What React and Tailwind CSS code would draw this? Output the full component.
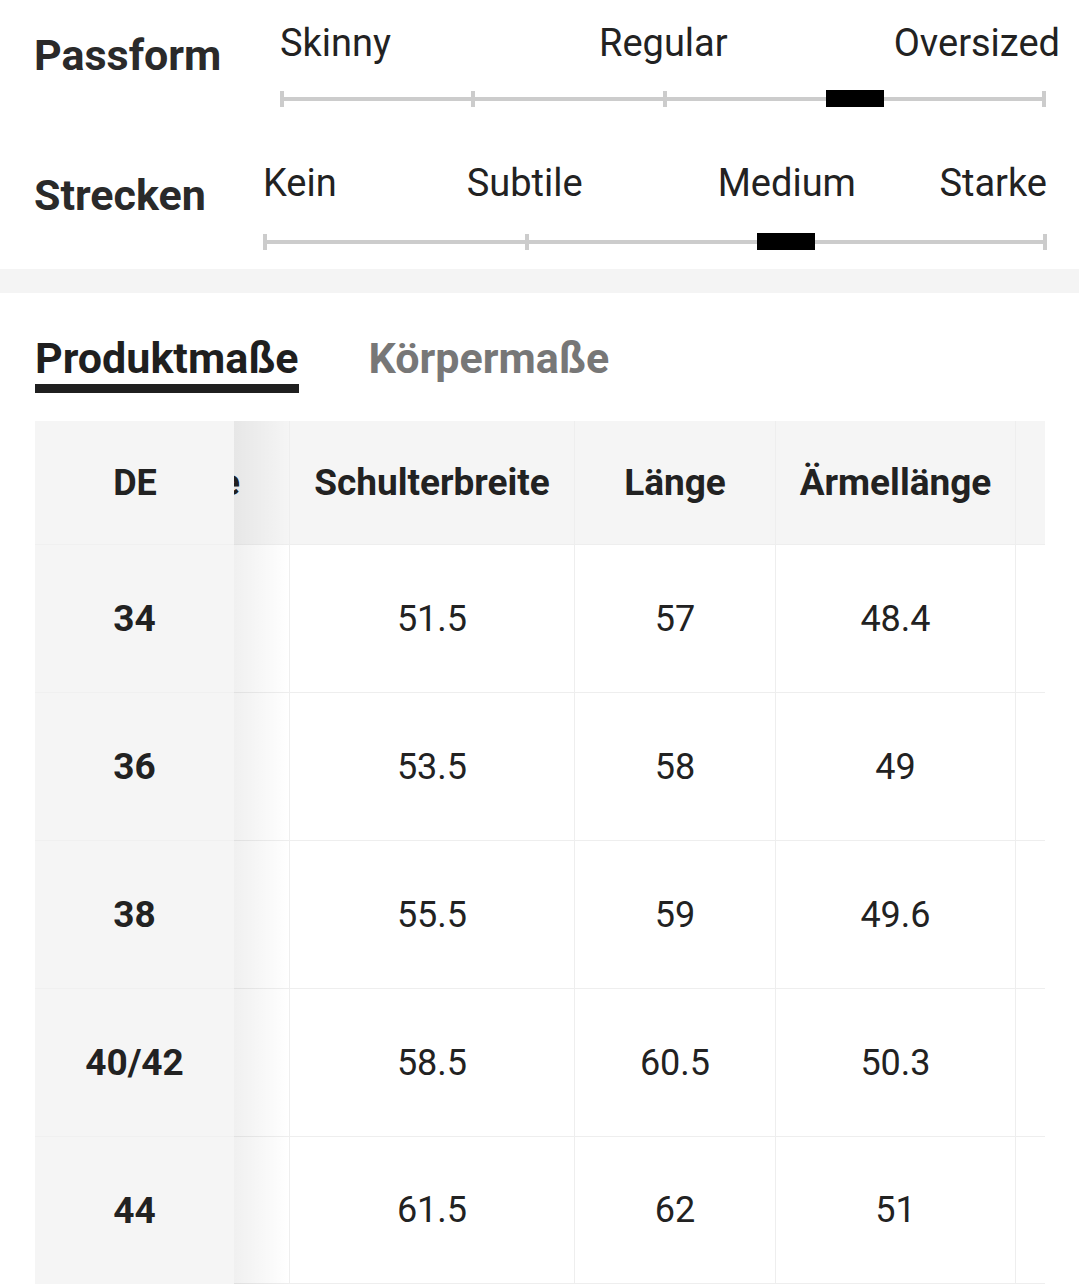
const FONT = { fontFamily: 'Roboto, "Noto Sans", Arial, sans-serif' }

const ROWS = [
  { de: '34', schulter: '51.5', laenge: '57', aermel: '48.4' },
  { de: '36', schulter: '53.5', laenge: '58', aermel: '49' },
  { de: '38', schulter: '55.5', laenge: '59', aermel: '49.6' },
  { de: '40/42', schulter: '58.5', laenge: '60.5', aermel: '50.3' },
  { de: '44', schulter: '61.5', laenge: '62', aermel: '51' },
]

function Slider({ width, ticks, thumb }) {
  return (
    <div className="relative h-[4px] bg-[#cccccc]" style={{ width }}>
      {ticks.map((t, i) => (
        <div
          key={i}
          className="absolute top-[-6px] h-[16px] w-[4px] bg-[#cccccc]"
          style={{ left: t }}
        />
      ))}
      <div className="absolute top-[-7px] h-[17px] w-[58px] bg-black" style={{ left: thumb }} />
    </div>
  )
}

export default function App() {
  return (
    <div className="w-[1079px] bg-white text-[#222]" style={FONT}>
      {/* fit sliders */}
      <div className="pl-[34px] pt-[25px] h-[269px]">
        <div className="flex items-start">
          <div className="w-[246px] pt-[5px] text-[43px] font-bold leading-[50px] text-[#2a2a2a]">Passform</div>
          <div className="w-[780px]">
            <div className="flex h-[36px] items-center text-[38px] leading-none">
              <span>Skinny</span>
              <span className="ml-[208px]">Regular</span>
              <span className="ml-auto">Oversized</span>
            </div>
            <div className="mt-[36px]">
              <Slider width={766} ticks={[0, 191, 383, 574, 762]} thumb={546} />
            </div>
          </div>
        </div>

        <div className="mt-[64px] flex items-start">
          <div className="w-[229px] pt-[5px] text-[43px] font-bold leading-[50px] text-[#2a2a2a]">Strecken</div>
          <div className="w-[784px]">
            <div className="flex h-[36px] items-center text-[38px] leading-none">
              <span>Kein</span>
              <span className="ml-[130px]">Subtile</span>
              <span className="ml-[135px]">Medium</span>
              <span className="ml-auto">Starke</span>
            </div>
            <div className="mt-[39px]">
              <Slider width={784} ticks={[0, 262, 523, 780]} thumb={494} />
            </div>
          </div>
        </div>
      </div>

      <div className="h-[24px] bg-[#f4f4f4]" />

      {/* tabs */}
      <div className="flex gap-[70px] pl-[35px] pt-[40px]">
        <div className="flex flex-col">
          <span className="text-[43px] font-bold leading-[50px] text-[#1f1f1f]">Produktmaße</span>
          <div className="mt-[1px] h-[9px] bg-[#1f1f1f]" />
        </div>
        <span className="text-[43px] font-bold leading-[50px] text-[#777]">Körpermaße</span>
      </div>

      {/* size table */}
      <div className="ml-[35px] mt-[28px] flex w-[1010px]">
        <div className="w-[199px] shrink-0 bg-[#f5f5f5]">
          <div className="flex h-[123px] items-center justify-center pl-[1px] text-[36px] font-bold">DE</div>
          {ROWS.map((r) => (
            <div key={r.de} className="flex h-[148px] items-center justify-center border-t border-[#f0f0f0] text-[37px] font-bold">
              {r.de}
            </div>
          ))}
        </div>

        <div className="relative flex-1 overflow-hidden">
          <div className="ml-[-145px] flex">
            <Column width={200} head="Größe" headClass="justify-end pr-[49px]" cells={ROWS.map(() => '')} />
            <Column width={285} head="Schulterbreite" cells={ROWS.map((r) => r.schulter)} />
            <Column width={201} head="Länge" cells={ROWS.map((r) => r.laenge)} />
            <Column width={240} head="Ärmellänge" cells={ROWS.map((r) => r.aermel)} />
            <Column width={300} head="" cells={ROWS.map(() => '')} />
          </div>
          <div className="pointer-events-none absolute inset-y-0 left-0 w-[56px] bg-gradient-to-r from-black/[0.06] to-transparent" />
        </div>
      </div>
    </div>
  )
}

function Column({ width, head, cells, headClass = 'justify-center' }) {
  return (
    <div className="shrink-0 border-l border-[#eeeeee]" style={{ width }}>
      <div className={`flex h-[123px] items-center whitespace-nowrap bg-[#f5f5f5] text-[37px] font-bold ${headClass}`}>
        {head}
      </div>
      {cells.map((c, i) => (
        <div
          key={i}
          className={`flex h-[148px] items-center justify-center whitespace-nowrap border-t border-[#eeeeee] text-[36px] ${i === cells.length - 1 ? 'border-b' : ''}`}
        >
          {c}
        </div>
      ))}
    </div>
  )
}
